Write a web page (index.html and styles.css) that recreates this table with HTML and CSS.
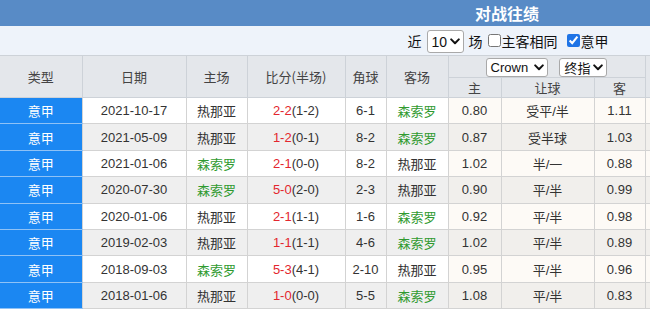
FILE: index.html
```html
<!DOCTYPE html>
<html lang="zh-CN">
<head>
<meta charset="utf-8">
<title>对战往绩</title>
<link rel="stylesheet" href="styles.css">
</head>
<body>
<div class="panel">
  <div class="title">对战往绩</div>
  <div class="filters">
    <span class="lbl">近</span>
    <span class="sel sel-num">10<svg class="chev" viewBox="0 0 10 7" width="10" height="7"><path d="M1.2 1.4 L5 5.2 L8.8 1.4" fill="none" stroke="#111" stroke-width="2" stroke-linecap="round" stroke-linejoin="round"/></svg></span>
    <span class="lbl">场</span>
    <label class="chk"><input type="checkbox">主客相同</label>
    <label class="chk"><input type="checkbox" checked>意甲</label>
  </div>
  <table class="grid">
    <colgroup>
      <col class="c-type"><col class="c-date"><col class="c-home"><col class="c-score"><col class="c-corner"><col class="c-away"><col class="c-o1"><col class="c-o2"><col class="c-o3"><col class="c-rest">
    </colgroup>
    <thead>
      <tr class="h1">
        <th rowspan="2">类型</th>
        <th rowspan="2">日期</th>
        <th rowspan="2">主场</th>
        <th rowspan="2">比分(半场)</th>
        <th rowspan="2">角球</th>
        <th rowspan="2">客场</th>
        <th colspan="3" class="pick">
          <span class="sel sel-co">Crown<svg class="chev" viewBox="0 0 10 7" width="10" height="7"><path d="M1.2 1.4 L5 5.2 L8.8 1.4" fill="none" stroke="#111" stroke-width="2" stroke-linecap="round" stroke-linejoin="round"/></svg></span>
          <span class="sel sel-kind">终指<svg class="chev" viewBox="0 0 10 7" width="10" height="7"><path d="M1.2 1.4 L5 5.2 L8.8 1.4" fill="none" stroke="#111" stroke-width="2" stroke-linecap="round" stroke-linejoin="round"/></svg></span>
        </th>
        <th rowspan="2"></th>
      </tr>
      <tr class="h2">
        <th>主</th>
        <th>让球</th>
        <th>客</th>
      </tr>
    </thead>
    <tbody>
      <tr>
        <td class="league">意甲</td><td>2021-10-17</td><td>热那亚</td><td><span class="ft">2-2</span>(1-2)</td><td>6-1</td><td class="g">森索罗</td><td class="odd">0.80</td><td class="odd">受平/半</td><td class="odd">1.11</td><td class="odd"></td>
      </tr>
      <tr class="alt">
        <td class="league">意甲</td><td>2021-05-09</td><td>热那亚</td><td><span class="ft">1-2</span>(0-1)</td><td>8-2</td><td class="g">森索罗</td><td class="odd">0.87</td><td class="odd">受半球</td><td class="odd">1.03</td><td class="odd"></td>
      </tr>
      <tr>
        <td class="league">意甲</td><td>2021-01-06</td><td class="g">森索罗</td><td><span class="ft">2-1</span>(0-0)</td><td>8-2</td><td>热那亚</td><td class="odd">1.02</td><td class="odd">半/一</td><td class="odd">0.88</td><td class="odd"></td>
      </tr>
      <tr class="alt">
        <td class="league">意甲</td><td>2020-07-30</td><td class="g">森索罗</td><td><span class="ft">5-0</span>(2-0)</td><td>2-3</td><td>热那亚</td><td class="odd">0.90</td><td class="odd">平/半</td><td class="odd">0.99</td><td class="odd"></td>
      </tr>
      <tr>
        <td class="league">意甲</td><td>2020-01-06</td><td>热那亚</td><td><span class="ft">2-1</span>(1-1)</td><td>1-6</td><td class="g">森索罗</td><td class="odd">0.92</td><td class="odd">平/半</td><td class="odd">0.98</td><td class="odd"></td>
      </tr>
      <tr class="alt">
        <td class="league">意甲</td><td>2019-02-03</td><td>热那亚</td><td><span class="ft">1-1</span>(1-1)</td><td>4-6</td><td class="g">森索罗</td><td class="odd">1.02</td><td class="odd">平/半</td><td class="odd">0.89</td><td class="odd"></td>
      </tr>
      <tr>
        <td class="league">意甲</td><td>2018-09-03</td><td class="g">森索罗</td><td><span class="ft">5-3</span>(4-1)</td><td>2-10</td><td>热那亚</td><td class="odd">0.95</td><td class="odd">平/半</td><td class="odd">0.96</td><td class="odd"></td>
      </tr>
      <tr class="alt">
        <td class="league">意甲</td><td>2018-01-06</td><td>热那亚</td><td><span class="ft">1-0</span>(0-0)</td><td>5-5</td><td class="g">森索罗</td><td class="odd">1.08</td><td class="odd">平/半</td><td class="odd">0.83</td><td class="odd"></td>
      </tr>
    </tbody>
  </table>
</div>
</body>
</html>
```
FILE: styles.css
```css
html, body {
  margin: 0;
  padding: 0;
  background: #ffffff;
  overflow: hidden;
}

body {
  font-family: "Liberation Sans", "Noto Sans CJK SC", sans-serif;
  font-size: 13px;
  color: #333333;
}

.panel {
  width: 1014px;
}

.title {
  height: 26px;
  background: #588bc6;
  color: #ffffff;
  font-family: "Noto Sans CJK SC", sans-serif;
  font-weight: bold;
  font-size: 16px;
  display: flex;
  align-items: center;
  justify-content: center;
}

.filters {
  height: 29px;
  background: #eef3fa;
  display: flex;
  align-items: center;
  justify-content: center;
  gap: 5px;
  font-family: "Noto Sans CJK SC", sans-serif;
  font-size: 14px;
  color: #111111;
  padding-left: 2px;
}

.lbl {
  line-height: 1;
}

.chk {
  display: inline-flex;
  align-items: center;
  line-height: 1;
}

.chk input {
  width: 13px;
  height: 13px;
  margin: 0 1px 0 0;
  accent-color: #1f74e6;
}

.chk + .chk {
  margin-left: 4px;
}

.sel {
  display: inline-flex;
  align-items: center;
  justify-content: space-between;
  box-sizing: border-box;
  background: #ffffff;
  border: 1px solid #a9a9a9;
  border-radius: 3px;
  color: #111111;
  font-family: "Liberation Sans", "Noto Sans CJK SC", sans-serif;
  line-height: 1;
  vertical-align: middle;
}

.chev {
  flex: none;
}

.sel-num {
  width: 37px;
  height: 23px;
  font-size: 14px;
  padding: 0 3px 0 4px;
  margin-top: 2px;
}

.sel-co {
  width: 62px;
  height: 19px;
  font-size: 13px;
  padding: 0 3px 0 4px;
}

.sel-kind {
  width: 48px;
  height: 19px;
  font-size: 13px;
  padding: 0 3px 0 4px;
  margin-left: 9px;
  font-family: "Noto Sans CJK SC", sans-serif;
}

.grid {
  width: 1014px;
  table-layout: fixed;
  border-collapse: collapse;
  border-spacing: 0;
}

.c-type { width: 82px; }
.c-date { width: 104px; }
.c-home { width: 61px; }
.c-score { width: 98px; }
.c-corner { width: 41px; }
.c-away { width: 62px; }
.c-o1 { width: 53px; }
.c-o2 { width: 93px; }
.c-o3 { width: 51px; }
.c-rest { width: 369px; }

.grid th {
  background: #e4e7eb;
  font-weight: normal;
  color: #444444;
  font-family: "Noto Sans CJK SC", sans-serif;
  font-size: 13px;
  border: 1px solid #cdd2d8;
  padding: 0;
  text-align: center;
  vertical-align: middle;
}

.grid th:first-child {
  border-left: 0;
}

.h1 th {
  height: 20px;
}

.h2 th {
  height: 19px;
}

.pick {
  white-space: nowrap;
  font-size: 0;
}

.grid td {
  height: 25.4px;
  padding: 0;
  text-align: center;
  vertical-align: middle;
  background: #ffffff;
  border: 1px solid #d3d3d3;
  white-space: nowrap;
  color: #333333;
}

.grid td:first-child {
  border-left: 0;
}

.grid tr.alt td {
  background: #efefef;
}

.grid td.odd {
  background: #fdfaf6;
}

.grid tr.alt td.odd {
  background: #f1efec;
}

.grid td.league,
.grid tr.alt td.league {
  background: #1b87f2;
  color: #ffffff;
  border-bottom-color: #8fc2f6;
  border-top-color: #8fc2f6;
  font-family: "Noto Sans CJK SC", sans-serif;
}

.grid td.g {
  color: #2f9a2f;
  font-family: "Noto Sans CJK SC", sans-serif;
}

.ft {
  color: #e3262e;
}
```
